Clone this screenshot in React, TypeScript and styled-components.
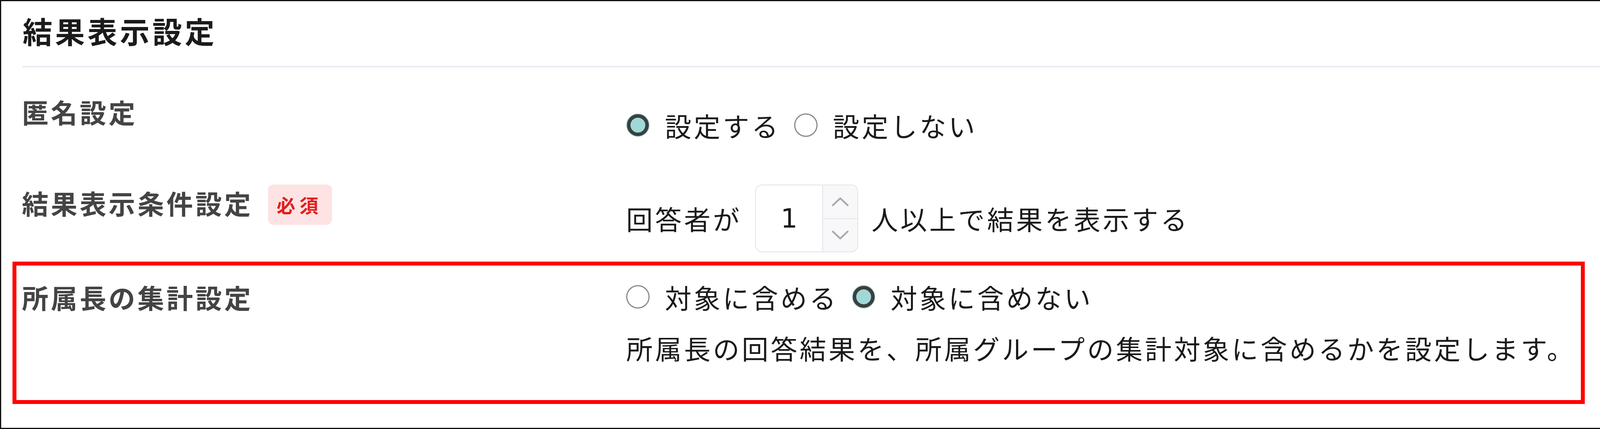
import React from "react";
import styled, { createGlobalStyle } from "styled-components";

const GlobalStyle = createGlobalStyle`
  html, body {
    margin: 0;
    padding: 0;
    background: #fff;
  }
  body {
    font-family: "Noto Sans CJK JP", "Noto Sans", sans-serif;
    color: #1a1a1a;
  }
`

const Panel = styled.div`
  box-sizing: border-box;
  width: 4168px;
  height: 1097px;
  border: 3px solid #111;
  background: #fff;
`

const Header = styled.header`
  margin-left: 55px;
  padding: 25px 0 41px;
  border-bottom: 3px solid #e7e5ee;
`

const Title = styled.h1`
  margin: 0;
  font-size: 76px;
  font-weight: 700;
  letter-spacing: 7px;
  line-height: 100px;
  color: #1b1b1b;
`

const Body = styled.div`
  padding-left: 53px;
`

const Row = styled.div<{ $top: number }>`
  display: grid;
  grid-template-columns: 1547px 1fr;
  padding-top: ${({ $top }) => $top}px;
`

const Label = styled.div`
  display: flex;
  align-items: center;
  height: 100px;
  font-size: 68px;
  font-weight: 700;
  letter-spacing: 6px;
  color: #444;
  white-space: nowrap;
`

const Required = styled.span`
  display: inline-flex;
  align-items: center;
  height: 103px;
  margin: 10px 0 0 38px;
  padding: 0 24px 0 22px;
  border-radius: 14px;
  background: #fde3e3;
  color: #e0201e;
  font-size: 48px;
  font-weight: 700;
  letter-spacing: 11px;
`

const Content = styled.div<{ $offset?: number }>`
  margin-top: ${({ $offset = 0 }) => $offset}px;
  font-size: 68px;
  letter-spacing: 6px;
  color: #1a1a1a;
`

const Line = styled.div`
  display: flex;
  align-items: center;
  min-height: 100px;
  white-space: nowrap;
`

const InputLine = styled(Line)`
  gap: 34px;
`

const Option = styled.label`
  display: inline-flex;
  align-items: center;
  gap: 39px;
  margin-right: 35px;
  cursor: pointer;
`

const Radio = styled.input.attrs({ type: "radio" })`
  appearance: none;
  flex: none;
  box-sizing: border-box;
  width: 60px;
  height: 60px;
  margin: 0;
  border-radius: 50%;
  border: 3px solid #8a8a8a;
  background: #fff;

  &:checked {
    width: 56px;
    height: 56px;
    margin: 2px;
    border: 9px solid #3e3e3e;
    background: #9fd9d7;
    box-shadow: 0 0 0 2px #a9dedc;
  }
`

const Stepper = styled.div`
  display: flex;
  box-sizing: border-box;
  width: 264px;
  height: 173px;
  border: 2px solid #e3e3e9;
  border-radius: 18px;
  overflow: hidden;
  background: #fff;
`

const NumberField = styled.input`
  flex: 1;
  width: 0;
  padding: 0;
  border: none;
  outline: none;
  background: transparent;
  text-align: center;
  font-family: "DejaVu Sans", sans-serif;
  font-size: 68px;
  color: #1a1a1a;
`

const SpinColumn = styled.div`
  display: flex;
  flex-direction: column;
  width: 88px;
  border-left: 2px solid #e3e3e9;
  background: #f8f8fa;
`

const SpinButton = styled.button`
  flex: 1;
  display: flex;
  align-items: center;
  justify-content: center;
  padding: 0;
  border: none;
  background: transparent;

  & + & {
    border-top: 2px solid #e3e3e9;
  }
`

const Highlight = styled.div`
  box-sizing: border-box;
  margin: 24px 108px 0 -24px;
  padding: 0 0 84px 14px;
  border: 10px solid #ff0000;
`

const Note = styled(Line)`
  margin-top: 30px;
`

const Chevron = ({ up }: { up?: boolean }) => (
  <svg width="44" height="24" viewBox="0 0 44 24">
    <polyline
      points={up ? "3,21 22,3 41,21" : "3,3 22,21 41,3"}
      fill="none"
      stroke="#ababab"
      strokeWidth="4.5"
      strokeLinecap="round"
      strokeLinejoin="round"
    />
  </svg>
)

const App: React.FC = () => (
  <>
    <GlobalStyle />
    <Panel>
      <Header>
        <Title>結果表示設定</Title>
      </Header>

      <Body>
        <Row $top={63}>
          <Label>匿名設定</Label>
          <Content $offset={35}>
            <Line>
              <Option>
                <Radio name="anonymous" defaultChecked />
                設定する
              </Option>
              <Option>
                <Radio name="anonymous" />
                設定しない
              </Option>
            </Line>
          </Content>
        </Row>

        <Row $top={98}>
          <Label>
            結果表示条件設定
            <Required>必須</Required>
          </Label>
          <Content $offset={4}>
            <InputLine>
              <span>回答者が</span>
              <Stepper>
                <NumberField type="text" defaultValue="1" />
                <SpinColumn>
                  <SpinButton type="button"><Chevron up /></SpinButton>
                  <SpinButton type="button"><Chevron /></SpinButton>
                </SpinColumn>
              </Stepper>
              <span>人以上で結果を表示する</span>
            </InputLine>
          </Content>
        </Row>

        <Highlight>
          <Row $top={30}>
            <Label>所属長の集計設定</Label>
            <Content>
              <Line>
                <Option>
                  <Radio name="manager" />
                  対象に含める
                </Option>
                <Option>
                  <Radio name="manager" defaultChecked />
                  対象に含めない
                </Option>
              </Line>
              <Note>所属長の回答結果を、所属グループの集計対象に含めるかを設定します。</Note>
            </Content>
          </Row>
        </Highlight>
      </Body>
    </Panel>
  </>
);

export default App;
